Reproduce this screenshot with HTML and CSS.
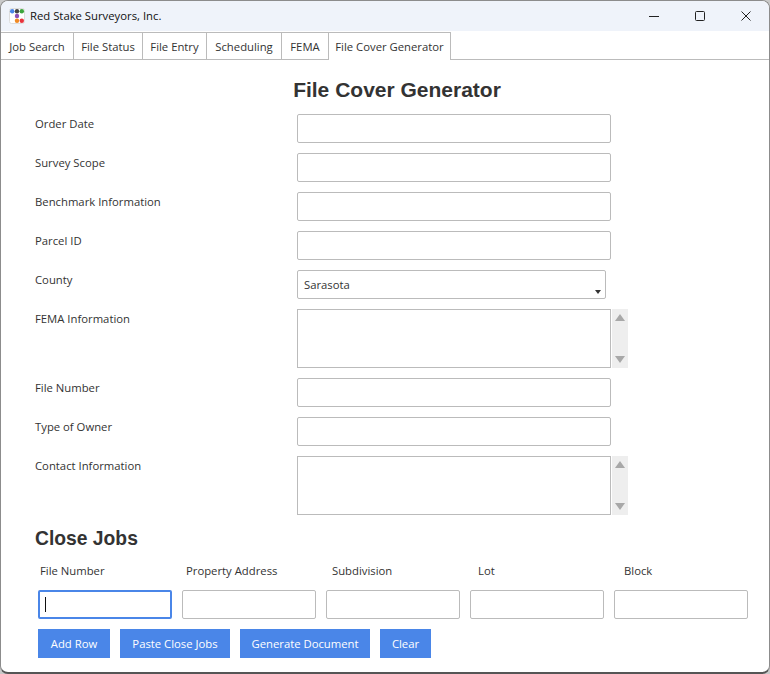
FILE: index.html
```html
<!DOCTYPE html>
<html>
	<head>
		<meta charset="utf-8">
		<title>Red Stake Surveyors, Inc.</title>
		<link rel="stylesheet" href="styles.css">
	</head>
	<body>
		<div class="Window">
			<div class="TitleBar">
				<svg class="AppIcon" width="16" height="16" viewBox="0 0 16 16">
					<rect x="0.5" y="0.5" width="15" height="15" rx="2" fill="#fff" stroke="#ddd"/>
					<circle cx="3.2" cy="3.2" r="2.2" fill="#4a86e8"/>
					<circle cx="8" cy="3.2" r="2.2" fill="#444"/>
					<circle cx="12.8" cy="3.2" r="2.2" fill="#3da53d"/>
					<circle cx="8" cy="8" r="2.2" fill="#8e4fb5"/>
					<circle cx="8" cy="12.8" r="2.2" fill="#f08a24"/>
					<circle cx="12.8" cy="12.8" r="2.2" fill="#e8323c"/>
				</svg>
				<span class="AppName">Red Stake Surveyors, Inc.</span>
				<div class="WinButtons">
					<svg width="12" height="12" viewBox="0 0 12 12"><path d="M1 6.5H11" stroke="#222" fill="none"/></svg>
					<svg width="12" height="12" viewBox="0 0 12 12"><rect x="1.5" y="1.5" width="9" height="9" rx="1" stroke="#222" fill="none"/></svg>
					<svg width="12" height="12" viewBox="0 0 12 12"><path d="M1.5 1.5L10.5 10.5M10.5 1.5L1.5 10.5" stroke="#222" fill="none"/></svg>
				</div>
			</div>

			<div class="TabBar">
				<div class="Tab">Job Search</div>
				<div class="Tab">File Status</div>
				<div class="Tab">File Entry</div>
				<div class="Tab">Scheduling</div>
				<div class="Tab">FEMA</div>
				<div class="Tab TabActive">File Cover Generator</div>
			</div>

			<div class="Content">
				<h1 class="PageTitle">File Cover Generator</h1>

				<div class="FormRow">
					<label>Order Date</label>
					<input type="text" class="TextBox">
				</div>
				<div class="FormRow">
					<label>Survey Scope</label>
					<input type="text" class="TextBox">
				</div>
				<div class="FormRow">
					<label>Benchmark Information</label>
					<input type="text" class="TextBox">
				</div>
				<div class="FormRow">
					<label>Parcel ID</label>
					<input type="text" class="TextBox">
				</div>
				<div class="FormRow">
					<label>County</label>
					<div class="SelectWrap">
						<select class="SelectBox"><option>Sarasota</option></select>
					</div>
				</div>
				<div class="FormRow">
					<label>FEMA Information</label>
					<div class="AreaWrap">
						<textarea class="AreaBox"></textarea>
						<div class="ScrollBar"><span class="ArrowUp"></span><span class="ArrowDown"></span></div>
					</div>
				</div>
				<div class="FormRow">
					<label>File Number</label>
					<input type="text" class="TextBox">
				</div>
				<div class="FormRow">
					<label>Type of Owner</label>
					<input type="text" class="TextBox">
				</div>
				<div class="FormRow">
					<label>Contact Information</label>
					<div class="AreaWrap">
						<textarea class="AreaBox"></textarea>
						<div class="ScrollBar"><span class="ArrowUp"></span><span class="ArrowDown"></span></div>
					</div>
				</div>

				<h2 class="SectionTitle">Close Jobs</h2>
				<div class="JobHeads">
					<span>File Number</span>
					<span>Property Address</span>
					<span>Subdivision</span>
					<span>Lot</span>
					<span>Block</span>
				</div>
				<div class="JobInputs">
					<div class="FocusWrap">
						<input type="text" class="JobBox JobFocus">
						<span class="Caret"></span>
					</div>
					<input type="text" class="JobBox">
					<input type="text" class="JobBox">
					<input type="text" class="JobBox">
					<input type="text" class="JobBox">
				</div>
				<div class="ButtonRow">
					<button class="ButtonBlue">Add Row</button>
					<button class="ButtonBlue">Paste Close Jobs</button>
					<button class="ButtonBlue">Generate Document</button>
					<button class="ButtonBlue">Clear</button>
				</div>
			</div>
		</div>
	</body>
</html>
```

FILE: styles.css
```css
* {
	box-sizing: border-box;
}

html, body {
	height: 100%;
}

body {
	margin: 0;
	background-color: #c9c9c9;
	font-family: "Open Sans", "Noto Sans", sans-serif;
	font-size: 11.3px;
	color: #333;
}

.Window {
	height: 674px;
	display: flex;
	flex-direction: column;
	background-color: #fff;
	border: 1px solid #8c8c8c;
	border-bottom: 2px solid #555;
	border-radius: 8px;
	overflow: hidden;
}

.TitleBar {
	height: 30px;
	flex: none;
	display: flex;
	align-items: center;
	padding-left: 8px;
	background-color: #eff3fa;
}

.AppIcon {
	flex: none;
}

.AppName {
	margin-left: 5px;
	margin-bottom: 2px;
	color: #111;
}

.WinButtons {
	margin-left: auto;
	display: flex;
	gap: 34px;
	padding-right: 17px;
}

.TabBar {
	height: 29px;
	flex: none;
	display: grid;
	grid-template-columns: 73px 69px 64px 75px 47px 122px;
	padding-top: 1px;
	border-bottom: 1px solid #bbb;
}

.Tab {
	text-align: center;
	line-height: 27px;
	border-top: 1px solid #bbb;
	border-right: 1px solid #bbb;
}

.TabActive {
	height: 28px;
	background-color: #fff;
}

.Content {
	flex: 1;
	padding: 0 20px 0 37px;
}

.PageTitle {
	margin: 17px 0 11px;
	padding-left: 7px;
	text-align: center;
	font-family: "Liberation Sans", Arial, sans-serif;
	font-size: 21px;
	line-height: 26px;
	color: #333;
}

.FormRow {
	display: grid;
	grid-template-columns: 262px 1fr;
	margin-left: -3px;
	margin-bottom: 10px;
}

.FormRow label {
	padding-top: 1px;
	line-height: 18px;
}

.TextBox {
	display: block;
	width: 314px;
	height: 29px;
	border: 1px solid #bbb;
	border-radius: 2px;
	background-color: #fff;
}

.SelectWrap {
	position: relative;
	width: 309px;
}

.SelectWrap::after {
	content: "";
	position: absolute;
	right: 5px;
	top: 20px;
	border-left: 3.5px solid transparent;
	border-right: 3.5px solid transparent;
	border-top: 4px solid #333;
}

.SelectBox {
	display: block;
	width: 100%;
	height: 29px;
	padding: 0 6px 1px;
	appearance: none;
	border: 1px solid #bbb;
	border-radius: 2px;
	background-color: #fff;
	font-family: "Open Sans", "Noto Sans", sans-serif;
	font-size: 11.3px;
	color: #333;
}

.AreaWrap {
	display: flex;
	gap: 1px;
}

.AreaBox {
	display: block;
	width: 314px;
	height: 59px;
	border: 1px solid #bbb;
	resize: none;
	overflow: hidden;
}

.ScrollBar {
	width: 16px;
	height: 59px;
	display: flex;
	flex-direction: column;
	justify-content: space-between;
	align-items: center;
	padding: 5px 0;
	background-color: #eee;
}

.ArrowUp {
	border-left: 5px solid transparent;
	border-right: 5px solid transparent;
	border-bottom: 7px solid #a8a8a8;
}

.ArrowDown {
	border-left: 5px solid transparent;
	border-right: 5px solid transparent;
	border-top: 7px solid #a8a8a8;
}

.SectionTitle {
	margin: 11px 0 10px -3px;
	font-family: "Liberation Sans", Arial, sans-serif;
	font-size: 19.3px;
	line-height: 26px;
	color: #333;
}

.JobHeads {
	display: grid;
	grid-template-columns: repeat(5, 146px);
	margin-left: 2px;
	line-height: 18px;
}

.JobInputs {
	display: flex;
	gap: 10px;
	margin-top: 10px;
}

.FocusWrap {
	position: relative;
	width: 134px;
	height: 29px;
}

.JobBox {
	display: block;
	width: 134px;
	height: 29px;
	border: 1px solid #bbb;
	border-radius: 2px;
	background-color: #fff;
}

.JobFocus {
	border: 2px solid #4a86e8;
}

.Caret {
	position: absolute;
	left: 7px;
	top: 7px;
	width: 1px;
	height: 15px;
	background-color: #111;
}

.ButtonRow {
	display: grid;
	grid-template-columns: 72px 110px 130px 51px;
	gap: 10px;
	margin-top: 10px;
}

.ButtonBlue {
	height: 29px;
	padding: 0;
	border: 0;
	background-color: #4a86e8;
	font-family: "Open Sans", "Noto Sans", sans-serif;
	font-size: 11.3px;
	color: #fff;
}
```
